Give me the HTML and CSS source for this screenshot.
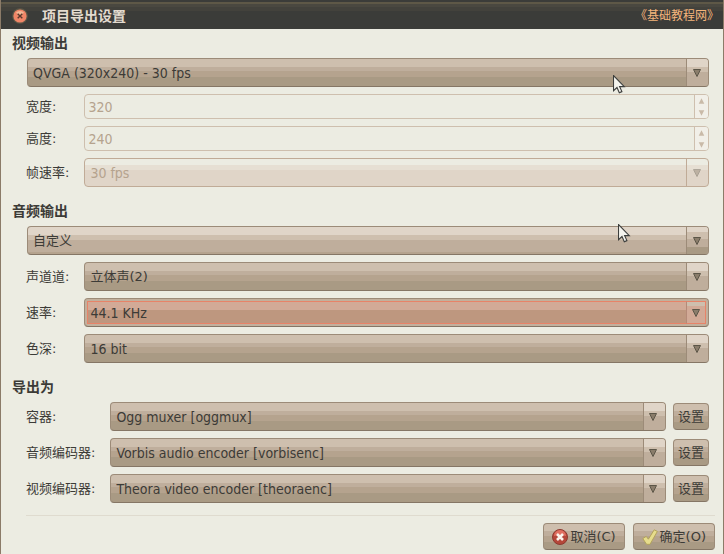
FILE: index.html
```html
<!DOCTYPE html>
<html lang="zh-CN">
<head>
<meta charset="utf-8">
<title>项目导出设置</title>
<meta name="viewport" content="width=device-width, initial-scale=1">
<link rel="stylesheet" href="styles.css">
</head>
<body>
<svg class="defs" aria-hidden="true">
  <symbol id="down" viewBox="0 0 8 8"><path d="M.5.5h7L4 7.5z" fill="#8a7d6b" stroke="#5c5648"/></symbol>
  <symbol id="pointer" viewBox="0 0 13 19"><path d="M.5.5v15.2l3.5-3.2 2.3 5.2 2.6-1.1-2.3-5h4.7z" fill="#f4f4ee" stroke="#3c3e3c" stroke-width="1.1"/></symbol>
</svg>
<div class="window">
  <header class="titlebar">
    <button class="close" type="button" aria-label="关闭">
      <svg viewBox="0 0 16 16" aria-hidden="true">
        <circle cx="8" cy="8" r="7.8" fill="#5e5847"/>
        <circle cx="8" cy="8" r="6.6" fill="#f08567"/>
        <path d="M4 4.6a5.6 5.6 0 0 1 8 0L8 8z" fill="#f3b896"/>
        <path d="M5.7 5.7l4.6 4.6m0-4.6l-4.6 4.6" stroke="#5b3a2e" stroke-width="1.4"/>
      </svg>
    </button>
    <h1>项目导出设置</h1>
    <span class="watermark">《基础教程网》</span>
  </header>

  <form class="content">
    <section>
      <h2>视频输出</h2>
      <div class="grid">
        <div class="combo wide">
          <select aria-label="视频预设"><option>QVGA (320x240) - 30 fps</option></select>
          <span class="arrow"><svg><use href="#down"/></svg></span>
        </div>
        <label for="width">宽度:</label>
        <div class="spin">
          <input id="width" type="number" value="320" disabled>
          <svg viewBox="0 0 14 24" aria-hidden="true"><path d="M4 9h6L7 3zM4 16h6l-3 6z"/></svg>
        </div>
        <label for="height">高度:</label>
        <div class="spin">
          <input id="height" type="number" value="240" disabled>
          <svg viewBox="0 0 14 24" aria-hidden="true"><path d="M4 9h6L7 3zM4 16h6l-3 6z"/></svg>
        </div>
        <label for="fps">帧速率:</label>
        <div class="combo off">
          <select id="fps" disabled><option>30 fps</option></select>
          <span class="arrow"><svg><use href="#down"/></svg></span>
        </div>
      </div>
    </section>

    <section>
      <h2>音频输出</h2>
      <div class="grid">
        <div class="combo wide light han">
          <select aria-label="音频预设"><option>自定义</option></select>
          <span class="arrow"><svg><use href="#down"/></svg></span>
        </div>
        <label for="channels">声道道:</label>
        <div class="combo han">
          <select id="channels"><option>立体声(2)</option></select>
          <span class="arrow"><svg><use href="#down"/></svg></span>
        </div>
        <label for="rate">速率:</label>
        <div class="combo focused">
          <select id="rate"><option>44.1 KHz</option></select>
          <span class="arrow"><svg><use href="#down"/></svg></span>
        </div>
        <label for="depth">色深:</label>
        <div class="combo">
          <select id="depth"><option>16 bit</option></select>
          <span class="arrow"><svg><use href="#down"/></svg></span>
        </div>
      </div>
    </section>

    <section>
      <h2>导出为</h2>
      <div class="grid with-action">
        <label for="muxer">容器:</label>
        <div class="combo">
          <select id="muxer"><option>Ogg muxer [oggmux]</option></select>
          <span class="arrow"><svg><use href="#down"/></svg></span>
        </div>
        <button class="button" type="button">设置</button>
        <label for="audio-enc">音频编码器:</label>
        <div class="combo">
          <select id="audio-enc"><option>Vorbis audio encoder [vorbisenc]</option></select>
          <span class="arrow"><svg><use href="#down"/></svg></span>
        </div>
        <button class="button" type="button">设置</button>
        <label for="video-enc">视频编码器:</label>
        <div class="combo">
          <select id="video-enc"><option>Theora video encoder [theoraenc]</option></select>
          <span class="arrow"><svg><use href="#down"/></svg></span>
        </div>
        <button class="button" type="button">设置</button>
      </div>
    </section>
  </form>

  <footer class="actions">
    <button class="button" type="button">
      <svg viewBox="0 0 16 16" aria-hidden="true">
        <circle cx="8" cy="8" r="7.500" fill="#b5473a" stroke="#8c3a30"/>
        <path d="M2 7a6 6 0 0 1 12 0q-6-2-12 0z" fill="#e07062"/>
        <path d="M5 5l6 6m0-6l-6 6" stroke="#fbf3ec" stroke-width="2.600"/>
      </svg>取消(C)</button>
    <button class="button" type="button">
      <svg viewBox="0 0 16 16" aria-hidden="true">
        <path d="M.8 9.600l3.400-2.200 2.200 2.800L12.200.8l3.200 1.600L8 15.300H4.600z" fill="#e6dc8c" stroke="#b3a35c"/>
      </svg>确定(O)</button>
  </footer>
</div>
<svg class="pointer first" aria-hidden="true"><use href="#pointer"/></svg>
<svg class="pointer second" aria-hidden="true"><use href="#pointer"/></svg>
</body>
</html>
```
FILE: styles.css
```css
* { box-sizing: border-box; }

body {
  margin: 0;
  min-height: 100vh;
  background: #3b3c39;
  color: #3c3b37;
  font: 13px/20px "DejaVu Sans", "Noto Sans CJK SC", sans-serif;
}

.defs { display: none; }

.window {
  min-height: 100vh;
  display: flex;
  flex-direction: column;
  background: #ecece2;
  border: solid #8b7b68;
  border-width: 0 1px;
}

.titlebar {
  height: 29px;
  padding: 3px 4px 0 11px;
  display: flex;
  align-items: center;
  gap: 14px;
  color: #e3dbcf;
  background: linear-gradient(#3b3c39 2px, #5e5847 2px 4px, #4a4840 4px 7px, #43423c 7px 11px, #3b3c39 11px);
}

.close {
  width: 16px;
  height: 16px;
  padding: 0;
  border: 0;
  background: none;
}

.close svg { display: block; }

h1, h2 {
  margin: 0;
  font-size: 14px;
  font-weight: bold;
}

h1 { margin-right: auto; }

.watermark { color: #f5b57c; font-size: 12px; }

.content { padding: 0 14px 0 25px; }

section + section { margin-top: 10px; }

h2 { margin-left: -14px; line-height: 29px; }

.grid {
  display: grid;
  grid-template-columns: max-content 1fr;
  gap: 7px;
  align-items: center;
}

.grid label { padding-right: 8px; }

.with-action { grid-template-columns: max-content 1fr max-content; }

.wide { grid-column: 1 / -1; margin-left: 1px; }

.combo, .spin {
  display: grid;
  grid-template-columns: 1fr 22px;
  border: 1px solid #9c8b78;
  border-radius: 4px;
  overflow: hidden;
  font-family: "DejaVu Sans Condensed", "DejaVu Sans", sans-serif;
  font-size: 14px;
}

.combo.han {
  font-family: "DejaVu Sans", "Noto Sans CJK SC", sans-serif;
  font-size: 13px;
}

.combo {
  height: 29px;
  border-bottom-color: #857665;
  background: linear-gradient(#cebfae 8px, #bfae9c 8px 12px, #b5a38e 12px 18px, #a99a84 18px);
}

select, input {
  appearance: none;
  min-width: 0;
  width: 100%;
  height: 100%;
  margin: 0;
  padding: 0 5px;
  border: 0;
  background: none;
  color: inherit;
  font: inherit;
  opacity: 1;
}

.arrow {
  display: grid;
  place-items: center;
  padding-right: 2px;
  border-left: 1px solid #9c8b78;
  background: linear-gradient(#e0d5c8 8px, #cebfae 8px 13px, #bfae9c 13px);
}

.arrow svg { width: 8px; height: 8px; }

.light { background: linear-gradient(#e0d5c8 8px, #cebfae 8px 13px, #bfae9c 13px 25px, #b5a38e 25px); }
.light .arrow { background: linear-gradient(#e0d5c8 5px, #cebfae 5px 12px, #bfae9c 12px 20px, #a99a84 20px); }

.off {
  color: #b5a38e;
  border-color: #c0ab97;
  background: linear-gradient(#ecece2 6px, #e6dfd3 6px 11px, #e0d5c8 11px);
  text-shadow: 1px 1px #f8f5ef;
}
.off .arrow { border-color: #c0ab97; background: none; }
.off .arrow svg { opacity: .4; }

.focused { box-shadow: inset 0 0 0 2px #c2b09d; }
.focused select {
  height: auto;
  margin: 2px 0 2px 2px;
  padding-left: 2px;
  border: solid #e88368;
  border-width: 1px 0 1px 1px;
  background: linear-gradient(#d2aa97 8px, #be977f 8px);
}
.focused .arrow {
  margin: 2px 2px 2px 0;
  padding-right: 0;
  border: 1px solid #e88368;
  border-left-color: #b58a78;
  background: linear-gradient(#cebfae 4px, #d2aa97 4px);
}

.spin {
  height: 25px;
  grid-template-columns: 1fr 14px;
  color: #b5a38e;
  border-color: #cebfae;
}
.spin input { padding: 0 3px; -moz-appearance: textfield; }
.spin input::-webkit-inner-spin-button { appearance: none; margin: 0; }
.spin svg {
  width: 14px;
  height: 23px;
  border-left: 1px solid #cebfae;
  background: #f1efe8;
  fill: #c9baa8;
}

.button {
  height: 27px;
  padding: 0 4px;
  display: flex;
  align-items: center;
  border: 1px solid #9c8b78;
  border-bottom-color: #857665;
  border-radius: 4px;
  background: linear-gradient(#cebfae 7px, #bfae9c 7px 12px, #b5a38e 12px 18px, #a99a84 18px);
  color: inherit;
  font: inherit;
}

.actions {
  margin: 12px 8px 0 25px;
  padding: 7px 0 3px;
  display: flex;
  justify-content: flex-end;
  gap: 8px;
  border-top: 1px solid #dfdbcf;
}
.actions .button { padding: 0 8px; gap: 2px; }
.actions svg { width: 16px; height: 16px; }

.pointer { position: absolute; width: 13px; height: 19px; }
.first { left: 613px; top: 75px; }
.second { left: 618px; top: 224px; }
```
